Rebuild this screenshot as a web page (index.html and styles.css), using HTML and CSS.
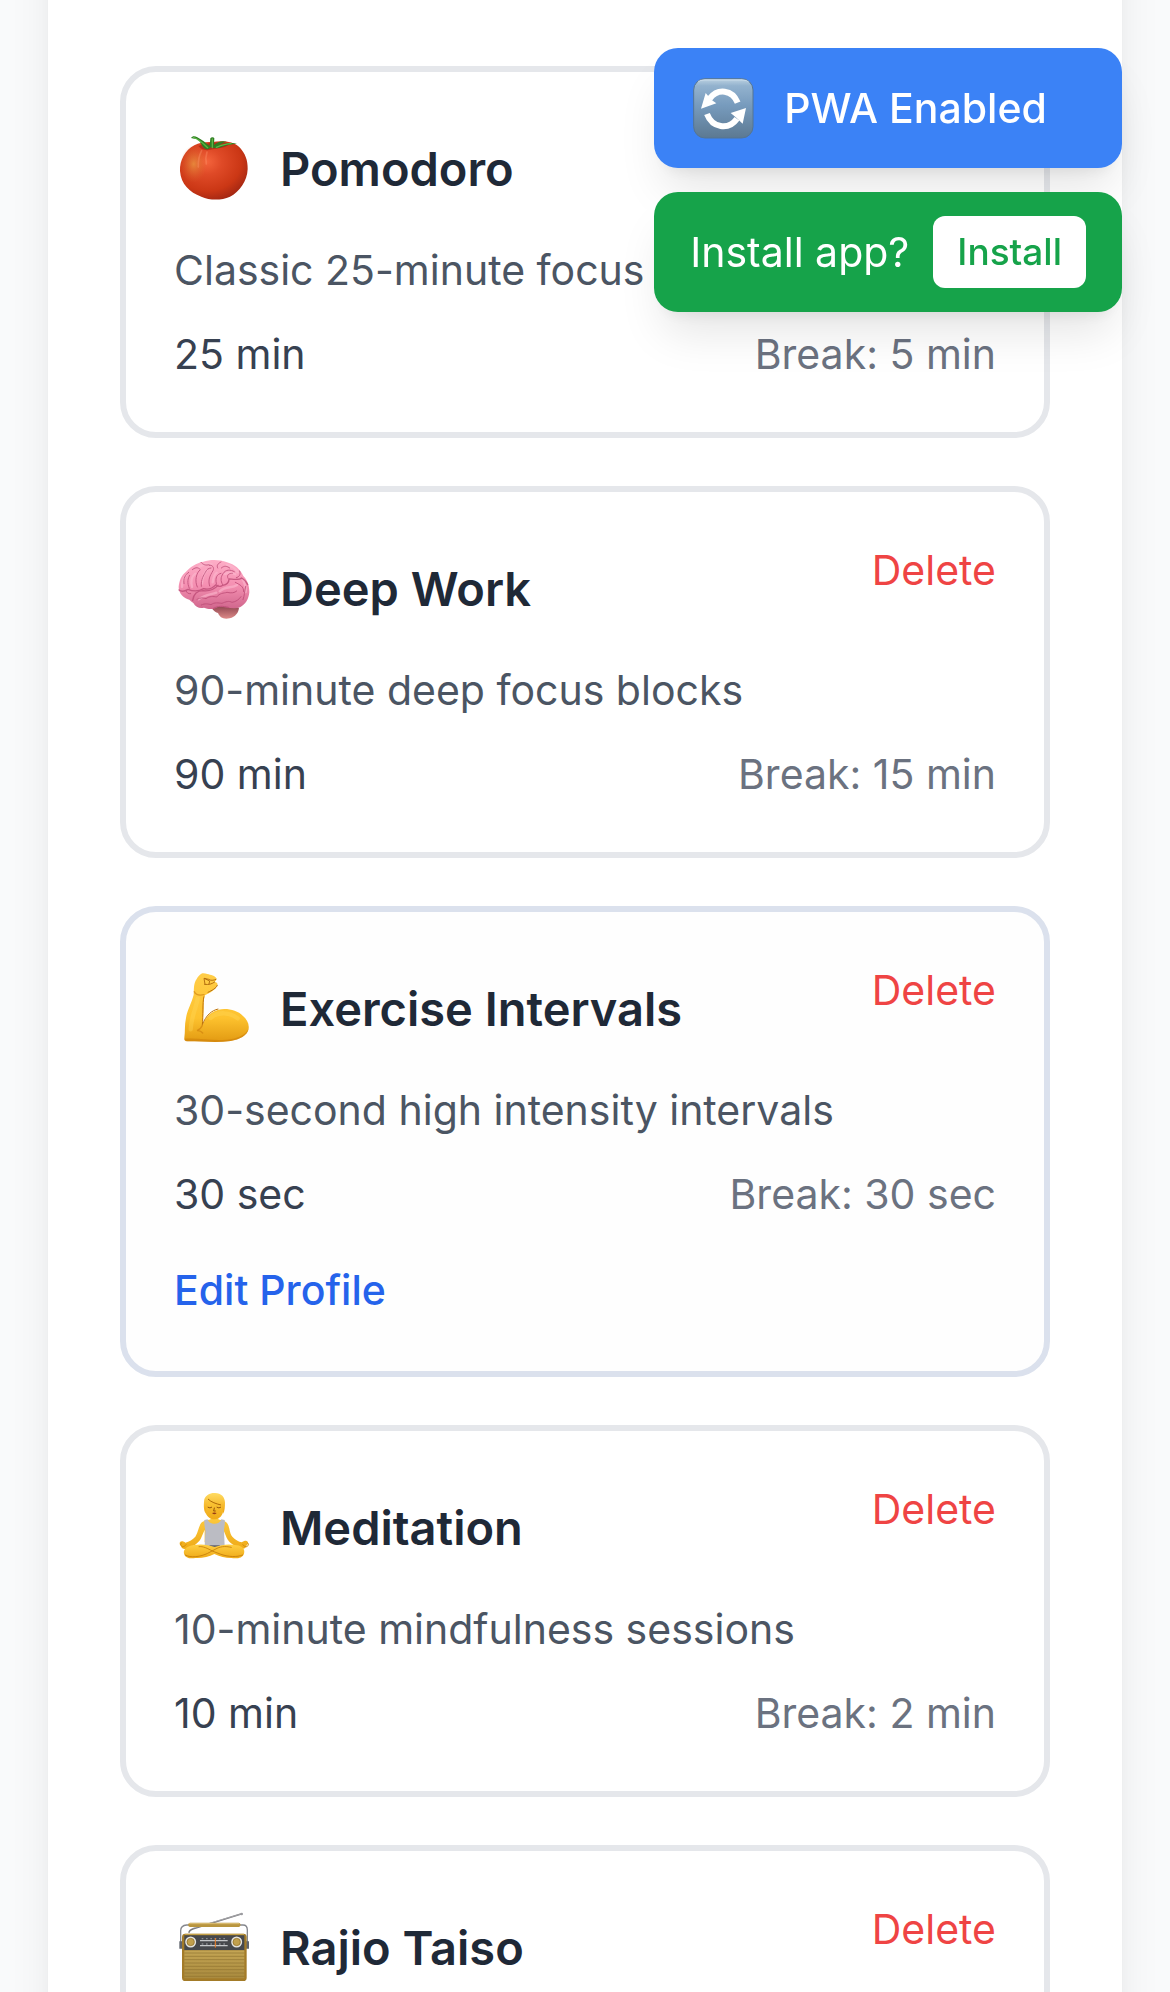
FILE: index.html
```html
<!DOCTYPE html>
<html lang="en">
<head>
<meta charset="utf-8">
<meta name="viewport" content="width=device-width, initial-scale=1">
<title>Timer Profiles</title>
<link rel="stylesheet" href="styles.css">
</head>
<body>
<div class="page">
  <main class="panel">
    <article class="card">
      <header class="card-head">
        <div class="card-title">
          <svg class="emoji" viewBox="27 27 234 234" aria-hidden="true">
            <defs>
              <radialGradient id="tomato" cx=".4" cy=".35" r=".72"><stop offset="0" stop-color="#f4643c"/><stop offset=".3" stop-color="#df4a27"/><stop offset=".7" stop-color="#cb3715"/><stop offset="1" stop-color="#9c2412"/></radialGradient>
              <radialGradient id="tomatoGlow" cx=".5" cy=".5" r=".5"><stop offset="0" stop-color="#e8953f" stop-opacity=".8"/><stop offset="1" stop-color="#d9652a" stop-opacity="0"/></radialGradient>
            </defs>
            <path d="M88 76C104 66 125 65 143 66c27-4 62-3 82 17 15 17 24 37 23 64-1 36-25 69-53 83-27 12-61 11-86 0-36-13-61-38-64-77-1-32 15-62 43-77z" fill="url(#tomato)"/>
            <ellipse cx="86" cy="132" rx="40" ry="56" fill="url(#tomatoGlow)"/>
            <path d="M110 92c-8 15-11 30-10 49M126 96c-4 12-4 25-2 36" fill="none" stroke="#ff9a70" stroke-width="5" opacity=".35" stroke-linecap="round"/>
            <path d="M100 78c22-9 62-14 95-8-10 15-32 14-48 17l-20 4c-12-1-22-6-27-13z" fill="#a52517" opacity=".7"/>
            <path d="M78 54c5-8 12-6 19-2 14 7 25 17 37 26l2-23c3-4 10-4 12 0l-1 20c12-10 23-14 38-10-12 3-20 8-25 14 17-7 35-14 56-8-20 1-35 5-48 11-11 4-22 3-30-1-4 5-8 8-14 6-13-3-14-18-24-27-6-5-13-3-22-6z" fill="#2f7d22"/>
            <path d="M85 52c18 6 30 18 43 31M142 57v26M154 82c14-6 27-11 44-11" fill="none" stroke="#5bb545" stroke-width="4" stroke-linecap="round"/>
          </svg>
          <h2>Pomodoro</h2>
        </div>
      </header>
      <p class="desc">Classic 25-minute focus</p>
      <div class="times"><span>25 min</span><span class="break">Break: 5 min</span></div>
    </article>

    <article class="card">
      <header class="card-head">
        <div class="card-title">
          <svg class="emoji" viewBox="27 12 234 234" aria-hidden="true">
            <defs>
              <linearGradient id="brain" x1="0" y1="0" x2="0" y2="1"><stop offset="0" stop-color="#fdaec7"/><stop offset=".5" stop-color="#f590b2"/><stop offset="1" stop-color="#d0668c"/></linearGradient>
              <linearGradient id="stem" x1="0" y1="0" x2="0" y2="1"><stop offset="0" stop-color="#8f4550"/><stop offset="1" stop-color="#dd8a88"/></linearGradient>
            </defs>
            <path d="M140 190c15-10 60-8 82-2-1 15-11 27-28 32-19 4-30-3-35-16-6-1-13-6-19-14z" fill="url(#stem)"/>
            <path d="M41 126c2-20 8-35 22-46 14-15 30-26 52-30 20-6 47-7 71 2 23 6 40 21 49 41 14 14 18 31 18 49-2 20-11 36-28 45-23 7-43-3-66-2-11 9-28 9-42 3-12 4-25-1-32-14-4-3-9-7-12-10-17-4-32-18-32-38z" fill="url(#brain)"/>
            <g fill="none" stroke="#fbb9ce" stroke-width="7" stroke-linecap="round" opacity=".6">
              <path d="M51 126c0-15 4-27 13-36M81 126c-4-17-1-32 10-40M111 116c1-18 4-29 14-40M143 112c2-15 5-25 12-29M101 163c20-14 37-14 53-20M164 139c19-17 37-8 52-19M185 60c17 3 27 11 33 22M234 104c6 13 10 25 8 37M101 66c14-9 26-10 39-9M180 87c12-6 20-5 31 1"/>
            </g>
            <g fill="none" stroke="#bd4b76" stroke-width="3" stroke-linecap="round" stroke-linejoin="round" opacity=".8">
              <path d="M42 135c9 7 19 3 27-2 14 6 29 8 47-2 14 4 27-1 37-12 7 6 14 7 20 2 13-2 19-9 19-19 15 1 31 4 38-3 8 4 13 10 18 20" stroke-width="4"/>
              <path d="M83 166c3-19 15-29 31-29 17 2 33-3 45-16" stroke-width="4"/>
              <path d="M57 116c-3-15 4-27 14-34M73 130c-8-18-4-30 1-39M97 126c-9-18-3-43 9-52-8-10-18-5-24 0M109 124c-2-22 8-34 12-42 5-10 9-12 17-13M134 123c-6-18 1-31 10-46 5-9-3-19-11-16M154 116c-4-19 2-28 14-31M173 119c-7-11-6-23 1-33 8-13 22-13 34-6"/>
              <path d="M108 52c7 8 15 10 24 7M158 69c-4-8 1-14 10-18M169 69c9-8 17-6 25 0M189 100c-5-10 3-16 13-15M224 78c4 12-2 18-10 20"/>
              <path d="M96 163c10-6 19-5 27-2 10-8 22-7 32-5 9-12 20-11 31-14 14 3 22 2 29-4M109 180c12-6 20-3 29-1 11-8 22-5 33-4 11-5 21-8 30-3 12-2 21-8 27-17M145 190c14-8 30-7 45-3M211 112c14 8 25 11 25 28M242 124c-4 18-3 26-8 40M63 137c2 7 7 10 14 9"/>
            </g>
          </svg>
          <h2>Deep Work</h2>
        </div>
        <button class="delete" type="button">Delete</button>
      </header>
      <p class="desc">90-minute deep focus blocks</p>
      <div class="times"><span>90 min</span><span class="break">Break: 15 min</span></div>
    </article>

    <article class="card is-active">
      <header class="card-head">
        <div class="card-title">
          <svg class="emoji" viewBox="27 27 234 234" aria-hidden="true">
            <defs>
              <linearGradient id="arm" x1="0" y1="0" x2="0" y2="1"><stop offset="0" stop-color="#ffcd48"/><stop offset=".65" stop-color="#fdc22e"/><stop offset="1" stop-color="#e29a12"/></linearGradient>
            </defs>
            <path d="M109 41c5-3 12-1 18 1 10 3 24 5 27 13 1 5-2 8-5 11 7 0 10 5 8 10-5 14-22 22-37 30-5 10-4 27-4 41-1 17-3 31-4 49 10-25 27-42 48-47 27-5 56 1 74 19 11 10 19 22 17 38-4 21-28 32-54 37-42 6-81 1-130 1-7 0-10-3-9-11 3-18 0-38 5-59 4-25 17-45 23-70 1-20 0-35 9-47 4-8 8-12 14-16z" fill="url(#arm)"/>
            <path d="M59 236c-1 6 2 8 8 8 49 0 88 5 130-1 26-5 50-16 54-37-10 20-38 31-66 33-43 4-86-6-126-3z" fill="#c97908" opacity=".5"/>
            <path d="M88 95c4 9 15 12 29 9M112 196c-3 9-9 13-16 16 7-1 12 1 17 7" fill="none" stroke="#cc7c0c" stroke-width="4" stroke-linecap="round" opacity=".6"/>
            <path d="M153 58c-8 4-16 4-22 0l-14-3 3 18M120 56l14 7-2 9M149 66c-8 6-18 9-30 7M157 76c-3 9-16 15-28 21" fill="none" stroke="#a96308" stroke-width="3" stroke-linejoin="round" stroke-linecap="round" opacity=".85"/>
            <path d="M117 109c-5 20-2 59-5 85 11-28 28-43 48-47" fill="none" stroke="#bf7309" stroke-width="3"/>
            <path d="M98 116c-4 27-19 52-21 92M137 174c20-20 58-18 81 1" fill="none" stroke="#ffd95d" stroke-width="13" stroke-linecap="round" opacity=".35"/>
          </svg>
          <h2>Exercise Intervals</h2>
        </div>
        <button class="delete" type="button">Delete</button>
      </header>
      <p class="desc">30-second high intensity intervals</p>
      <div class="times"><span>30 sec</span><span class="break">Break: 30 sec</span></div>
      <button class="edit" type="button">Edit Profile</button>
    </article>

    <article class="card">
      <header class="card-head">
        <div class="card-title">
          <svg class="emoji" viewBox="27 24 234 234" aria-hidden="true">
            <defs>
              <linearGradient id="skin" x1="0" y1="0" x2="0" y2="1"><stop offset="0" stop-color="#ffcf43"/><stop offset="1" stop-color="#efaa18"/></linearGradient>
              <linearGradient id="hair" x1="0" y1="0" x2="0" y2="1"><stop offset="0" stop-color="#ffdc63"/><stop offset="1" stop-color="#f0a20a"/></linearGradient>
            </defs>
            <path d="M137 98h23v20c9 4 22 4 28 14 7 12 5 27 14 38 10 10 18 15 29 17 6-5 14-6 17-2 2 5 0 10-3 11-1 9-9 12-18 9-18-6-34-16-42-32l-10-24v38h-56v-38l-11 26c-8 16-24 25-43 31-8 3-16-1-17-9-4-2-5-7-3-11 4-4 12-2 16 2 12-3 22-9 30-18 8-12 9-26 15-37 6-11 18-11 31-15z" fill="url(#skin)"/>
            <path d="M118 120l10-2c4 18 36 18 41 0l10 2c2 9-1 20-2 31l2 48-28 6-32-6 2-46c-2-12-4-24-3-33z" fill="#bbbcc3"/>
            <path d="M133 196h32l-5 11h-21z" fill="#62636c"/>
            <path d="M57 221c-3-12 8-22 26-25 22-5 44-3 66 5 22-8 46-10 66-5 17 2 26 12 22 25-5 14-21 15-38 13-19 0-33-4-51-12-17 9-37 13-57 12-16 3-30 0-34-13z" fill="url(#skin)"/>
            <path d="M61 225c15 10 47 5 67-5l28-15c15-7 29-6 43-3M102 200c12-2 25 5 42 14l24 9c24 8 47 9 65 2" fill="none" stroke="#c27b08" stroke-width="3" stroke-linecap="round" opacity=".8"/>
            <path d="M119 66c0-15 13-25 29-25s29 11 29 26l-2 24c-1 15-12 27-26 27-15 0-26-10-28-25z" fill="url(#skin)"/>
            <path d="M122 101c-7-11-6-30-4-43 4-12 17-20 32-19 19 0 30 13 30 29 0 12-1 24-5 33-2-12-2-23-10-31-12-4-24-5-32-12-6 13-11 28-11 43z" fill="url(#hair)"/>
            <path d="M129 57c10 10 24 14 39 18" fill="none" stroke="#ad6809" stroke-width="3"/>
            <path d="M129 82q6 4 11 0M156 82q6 4 11 0M148 84l-2 9h5" fill="none" stroke="#95530b" stroke-width="3" stroke-linecap="round"/>
            <path d="M141 99q7-3 14 0q-7 8-14 0z" fill="#973c16"/>
            <path d="M51 188c-6 3-5 9 1 12 6 0 9-3 12-7M246 188c7 3 5 9-1 12-6 0-10-3-12-7" fill="none" stroke="#d18b0c" stroke-width="3"/>
          </svg>
          <h2>Meditation</h2>
        </div>
        <button class="delete" type="button">Delete</button>
      </header>
      <p class="desc">10-minute mindfulness sessions</p>
      <div class="times"><span>10 min</span><span class="break">Break: 2 min</span></div>
    </article>

    <article class="card">
      <header class="card-head">
        <div class="card-title">
          <svg class="emoji" viewBox="27 24 234 234" aria-hidden="true">
            <defs>
              <linearGradient id="grille" x1="0" y1="0" x2="0" y2="1"><stop offset="0" stop-color="#c4a554"/><stop offset="1" stop-color="#a98a3e"/></linearGradient>
            </defs>
            <path d="M72 98c0-7 5-9 13-12L228 42" fill="none" stroke="#77777b" stroke-width="5"/>
            <path d="M85 84L228 42" stroke="#b9b9bd" stroke-width="2"/><circle cx="230" cy="42" r="4" fill="#9b9ba0"/>
            <path d="M47 130V92c0-11 7-16 18-17h169c8 0 13 6 13 15v40" fill="none" stroke="#85878d" stroke-width="4"/>
            <rect x="70" y="68" width="156" height="13" rx="5" fill="#b8953e"/><path d="M72 71h151" stroke="#dcc078" stroke-width="3"/>
            <path d="M43 124h9v22h-9zM243 124h9v22h-9z" fill="#60646d"/>
            <rect x="51" y="101" width="194" height="142" rx="10" fill="#a37b28"/>
            <path d="M59 103h178" stroke="#c9a64e" stroke-width="3"/>
            <path d="M58 106h180v45H58z" fill="#46484c"/>
            <rect x="58" y="151" width="180" height="84" fill="url(#grille)"/>
            <path d="M58 159h180M58 169h180M58 179h180M58 189h180M58 199h180M58 209h180M58 219h180M58 229h180" stroke="#8f7230" stroke-width="2"/>
            <path d="M105 122h83M105 137h83" stroke="#c5c7c9" stroke-width="4"/>
            <path d="M110 116h75M110 132h75" stroke="#898b8e" stroke-width="4" stroke-dasharray="5 8"/>
            <path d="M151 114v29" stroke="#ef7d21" stroke-width="3"/>
            <g fill="#c1a04d" stroke="#e5e3dd" stroke-width="5"><circle cx="77" cy="126" r="14"/><circle cx="215" cy="126" r="14"/></g>
            <g fill="none" stroke="#8e6d26" stroke-width="2"><circle cx="77" cy="126" r="11"/><circle cx="215" cy="126" r="11"/></g>
          </svg>
          <h2>Rajio Taiso</h2>
        </div>
        <button class="delete" type="button">Delete</button>
      </header>
    </article>
  </main>

  <aside class="toasts">
    <div class="toast toast-info">
      <svg class="sync" viewBox="15 15 198 198" aria-hidden="true">
        <defs>
          <linearGradient id="key" x1="0" y1="0" x2="0" y2="1"><stop offset="0" stop-color="#bdd2e2"/><stop offset=".12" stop-color="#93b2ce"/><stop offset=".45" stop-color="#779bbd"/><stop offset="1" stop-color="#5c7992"/></linearGradient>
        </defs>
        <rect x="26" y="26" width="178" height="178" rx="34" fill="url(#key)" stroke="#557593" stroke-width="3"/>
        <path d="M39 35q6-5 18-5h116q12 0 18 5" fill="none" stroke="#dce8f1" stroke-width="3" opacity=".6"/>
        <g fill="none" stroke="#fff" stroke-width="18"><path d="M158 98C142 58 98 54 74 86"/><path d="M66 132c16 42 64 50 90 14"/></g>
        <path d="M62 69l-14 47 46-16-15-11zM183 114l-46 15 17 14 19 18z" fill="#fff"/>
      </svg>
      <span class="toast-label">PWA Enabled</span>
    </div>
    <div class="toast toast-install">
      <span>Install app?</span>
      <button class="install" type="button">Install</button>
    </div>
  </aside>
</div>
</body>
</html>
```
FILE: styles.css
```css
* { box-sizing: border-box; }

body {
  margin: 0;
  background: #f9fafb;
  color: #374151;
  font-family: Inter, "Liberation Sans", sans-serif;
  font-size: 41px;
  line-height: 60px;
}

button {
  padding: 0;
  border: 0;
  background: none;
  font: inherit;
  cursor: pointer;
}

h2, p { margin: 0; }

.page {
  height: 100vh;
  overflow: hidden;
}

/* The list is shown part-way down, so the panel starts above the window. */
.panel {
  display: flex;
  flex-direction: column;
  gap: 48px;
  margin: -96px 48px 0;
  padding: 162px 72px 72px;
  background: #fff;
  box-shadow: 0 30px 45px -9px rgba(0, 0, 0, .1), 0 12px 18px -12px rgba(0, 0, 0, .1);
}

.card {
  flex: none;
  min-height: 372px;
  padding: 48px;
  border: 6px solid #e5e7eb;
  border-radius: 36px;
  background: #fff;
}

.card.is-active {
  border-color: #dbe1ed;
  background: #fefefe;
}

.card-head {
  display: flex;
  justify-content: space-between;
  align-items: flex-start;
  margin-bottom: 24px;
}

.card-title {
  display: flex;
  align-items: center;
  gap: 28px;
  height: 96px;
}

.emoji {
  flex: none;
  width: 78px;
  height: 78px;
}

h2 {
  padding-top: 2px;
  color: #1f2937;
  font-size: 47px;
  font-weight: 600;
}

.delete { color: #ef4444; }

.desc {
  margin-bottom: 24px;
  color: #4b5563;
}

.times {
  display: flex;
  justify-content: space-between;
}

.break { color: #6b7280; }

.edit {
  display: block;
  margin: 36px 0 3px;
  color: #2563eb;
  font-weight: 500;
}

.toasts {
  position: fixed;
  top: 48px;
  right: 48px;
  display: flex;
  flex-direction: column;
  gap: 24px;
}

.toast {
  display: flex;
  align-items: center;
  gap: 24px;
  min-height: 120px;
  padding: 24px 36px;
  border-radius: 24px;
  color: #fff;
  box-shadow: 0 30px 45px -9px rgba(0, 0, 0, .1), 0 12px 18px -12px rgba(0, 0, 0, .1);
}

.toast-info {
  gap: 28px;
  background: #3b82f6;
}

.toast-install { background: #16a34a; }
.toast-label { font-weight: 500; }

.sync {
  width: 66px;
  height: 66px;
}

.install {
  padding: 12px 24px;
  border-radius: 12px;
  background: #fff;
  color: #16a34a;
  font-size: 37px;
  font-weight: 500;
  line-height: 48px;
}
```
